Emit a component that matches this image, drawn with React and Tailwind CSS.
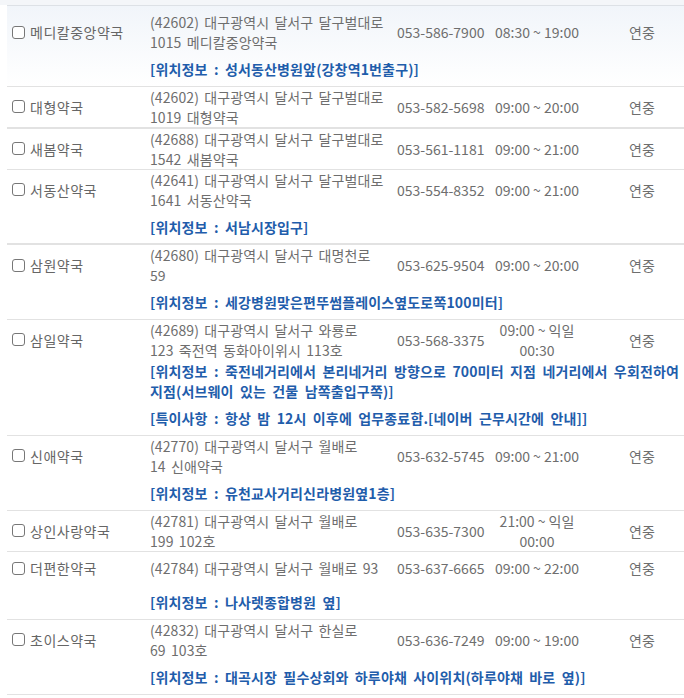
import React from "react";

const pharmacies = [
  {
    name: "메디칼중앙약국",
    addr: ["(42602) 대구광역시 달서구 달구벌대로", "1015 메디칼중앙약국"],
    tel: "053-586-7900",
    hours: ["08:30 ~ 19:00"],
    info: [["[위치정보 : 성서동산병원앞(강창역1번출구)]"]],
  },
  {
    name: "대형약국",
    addr: ["(42602) 대구광역시 달서구 달구벌대로", "1019 대형약국"],
    tel: "053-582-5698",
    hours: ["09:00 ~ 20:00"],
    thick: true,
  },
  {
    name: "새봄약국",
    addr: ["(42688) 대구광역시 달서구 달구벌대로", "1542 새봄약국"],
    tel: "053-561-1181",
    hours: ["09:00 ~ 21:00"],
  },
  {
    name: "서동산약국",
    addr: ["(42641) 대구광역시 달서구 달구벌대로", "1641 서동산약국"],
    tel: "053-554-8352",
    hours: ["09:00 ~ 21:00"],
    info: [["[위치정보 : 서남시장입구]"]],
    thick: true,
  },
  {
    name: "삼원약국",
    addr: ["(42680) 대구광역시 달서구 대명천로", "59"],
    tel: "053-625-9504",
    hours: ["09:00 ~ 20:00"],
    info: [["[위치정보 : 세강병원맞은편뚜썸플레이스옆도로쪽100미터]"]],
  },
  {
    name: "삼일약국",
    addr: ["(42689) 대구광역시 달서구 와룡로", "123 죽전역 동화아이위시 113호"],
    tel: "053-568-3375",
    hours: ["09:00 ~ 익일", "00:30"],
    info: [
      [
        "[위치정보 : 죽전네거리에서 본리네거리 방향으로 700미터 지점 네거리에서 우회전하여",
        "지점(서브웨이 있는 건물 남쪽출입구쪽)]",
      ],
      ["[특이사항 : 항상 밤 12시 이후에 업무종료함.[네이버 근무시간에 안내]]"],
    ],
  },
  {
    name: "신애약국",
    addr: ["(42770) 대구광역시 달서구 월배로", "14 신애약국"],
    tel: "053-632-5745",
    hours: ["09:00 ~ 21:00"],
    info: [["[위치정보 : 유천교사거리신라병원옆1층]"]],
  },
  {
    name: "상인사랑약국",
    addr: ["(42781) 대구광역시 달서구 월배로", "199 102호"],
    tel: "053-635-7300",
    hours: ["21:00 ~ 익일", "00:00"],
  },
  {
    name: "더편한약국",
    addr: ["(42784) 대구광역시 달서구 월배로 93"],
    tel: "053-637-6665",
    hours: ["09:00 ~ 22:00"],
    info: [["[위치정보 : 나사렛종합병원 옆]"]],
  },
  {
    name: "초이스약국",
    addr: ["(42832) 대구광역시 달서구 한실로", "69 103호"],
    tel: "053-636-7249",
    hours: ["09:00 ~ 19:00"],
    info: [["[위치정보 : 대곡시장 필수상회와 하루야채 사이위치(하루야채 바로 옆)]"]],
  },
];

const Lines = ({ lines }) =>
  lines.map((l, i) => (
    <span key={i} className="block whitespace-nowrap">
      {l}
    </span>
  ));

const PharmacyGroup = ({ p, first }) => {
  const infos = p.info || [];
  const last = infos.length;
  const border = p.thick ? "border-b-2" : "border-b";
  // main row: 2-line cells give 41px, single line rows are held at 34px
  const cell = (idx, twoLines) =>
    `p-0 align-middle border-[#e2e2e2] ${twoLines ? "h-[41px]" : "h-[34px]"} ${
      idx === last ? border : ""
    } ${first && idx === 0 ? "pt-[6px]" : ""}`;
  const mainTwo = p.addr.length > 1 || p.hours.length > 1;

  return (
    <tbody className={first ? "bg-linear-to-b from-[#f1f5fa] to-white" : ""}>
      <tr>
        <td className={`${cell(0, mainTwo)} pl-[5px]`}>
          <div className="flex items-center gap-[5px]">
            <span className="w-[13px] h-[13px] rounded-[3px] border border-[#777] bg-white shrink-0" />
            <span className="tracking-[0.5px] text-[#666]">{p.name}</span>
          </div>
        </td>
        <td className={`${cell(0, mainTwo)} pl-[3px] tracking-[0.1px] [word-spacing:2px]`}>
          <Lines lines={p.addr} />
        </td>
        <td className={`${cell(0, mainTwo)} pl-[4px]`}>{p.tel}</td>
        <td className={`${cell(0, mainTwo)} text-center`}>
          <Lines lines={p.hours} />
        </td>
        <td className={`${cell(0, mainTwo)} text-center`}>연중</td>
      </tr>
      {infos.map((lines, i) => (
        <tr key={i}>
          <td className={cell(i + 1, lines.length > 1)} />
          <td
            colSpan={4}
            className={`${cell(i + 1, lines.length > 1)} pl-[3px] font-bold text-[#1f5dab] tracking-[0.15px] [word-spacing:3px]`}
          >
            <Lines lines={lines} />
          </td>
        </tr>
      ))}
    </tbody>
  );
};

export default function App() {
  return (
    <div
      className="w-[684px] h-[698px] overflow-hidden bg-white text-[14px] leading-[20px] text-[#6e6e6e]"
      style={{ fontFamily: '"Noto Sans CJK KR", "Noto Sans", sans-serif' }}
    >
      <div className="h-[5px] bg-[#f4f6f9]" />
      <table className="ml-[7px] w-[691px] table-fixed border-t border-[#dde1e6]">
        <colgroup>
          <col className="w-[140px]" />
          <col className="w-[246px]" />
          <col className="w-[95px]" />
          <col className="w-[98px]" />
          <col className="w-[112px]" />
        </colgroup>
        {pharmacies.map((p, i) => (
          <PharmacyGroup key={p.name} p={p} first={i === 0} />
        ))}
      </table>
    </div>
  );
}
